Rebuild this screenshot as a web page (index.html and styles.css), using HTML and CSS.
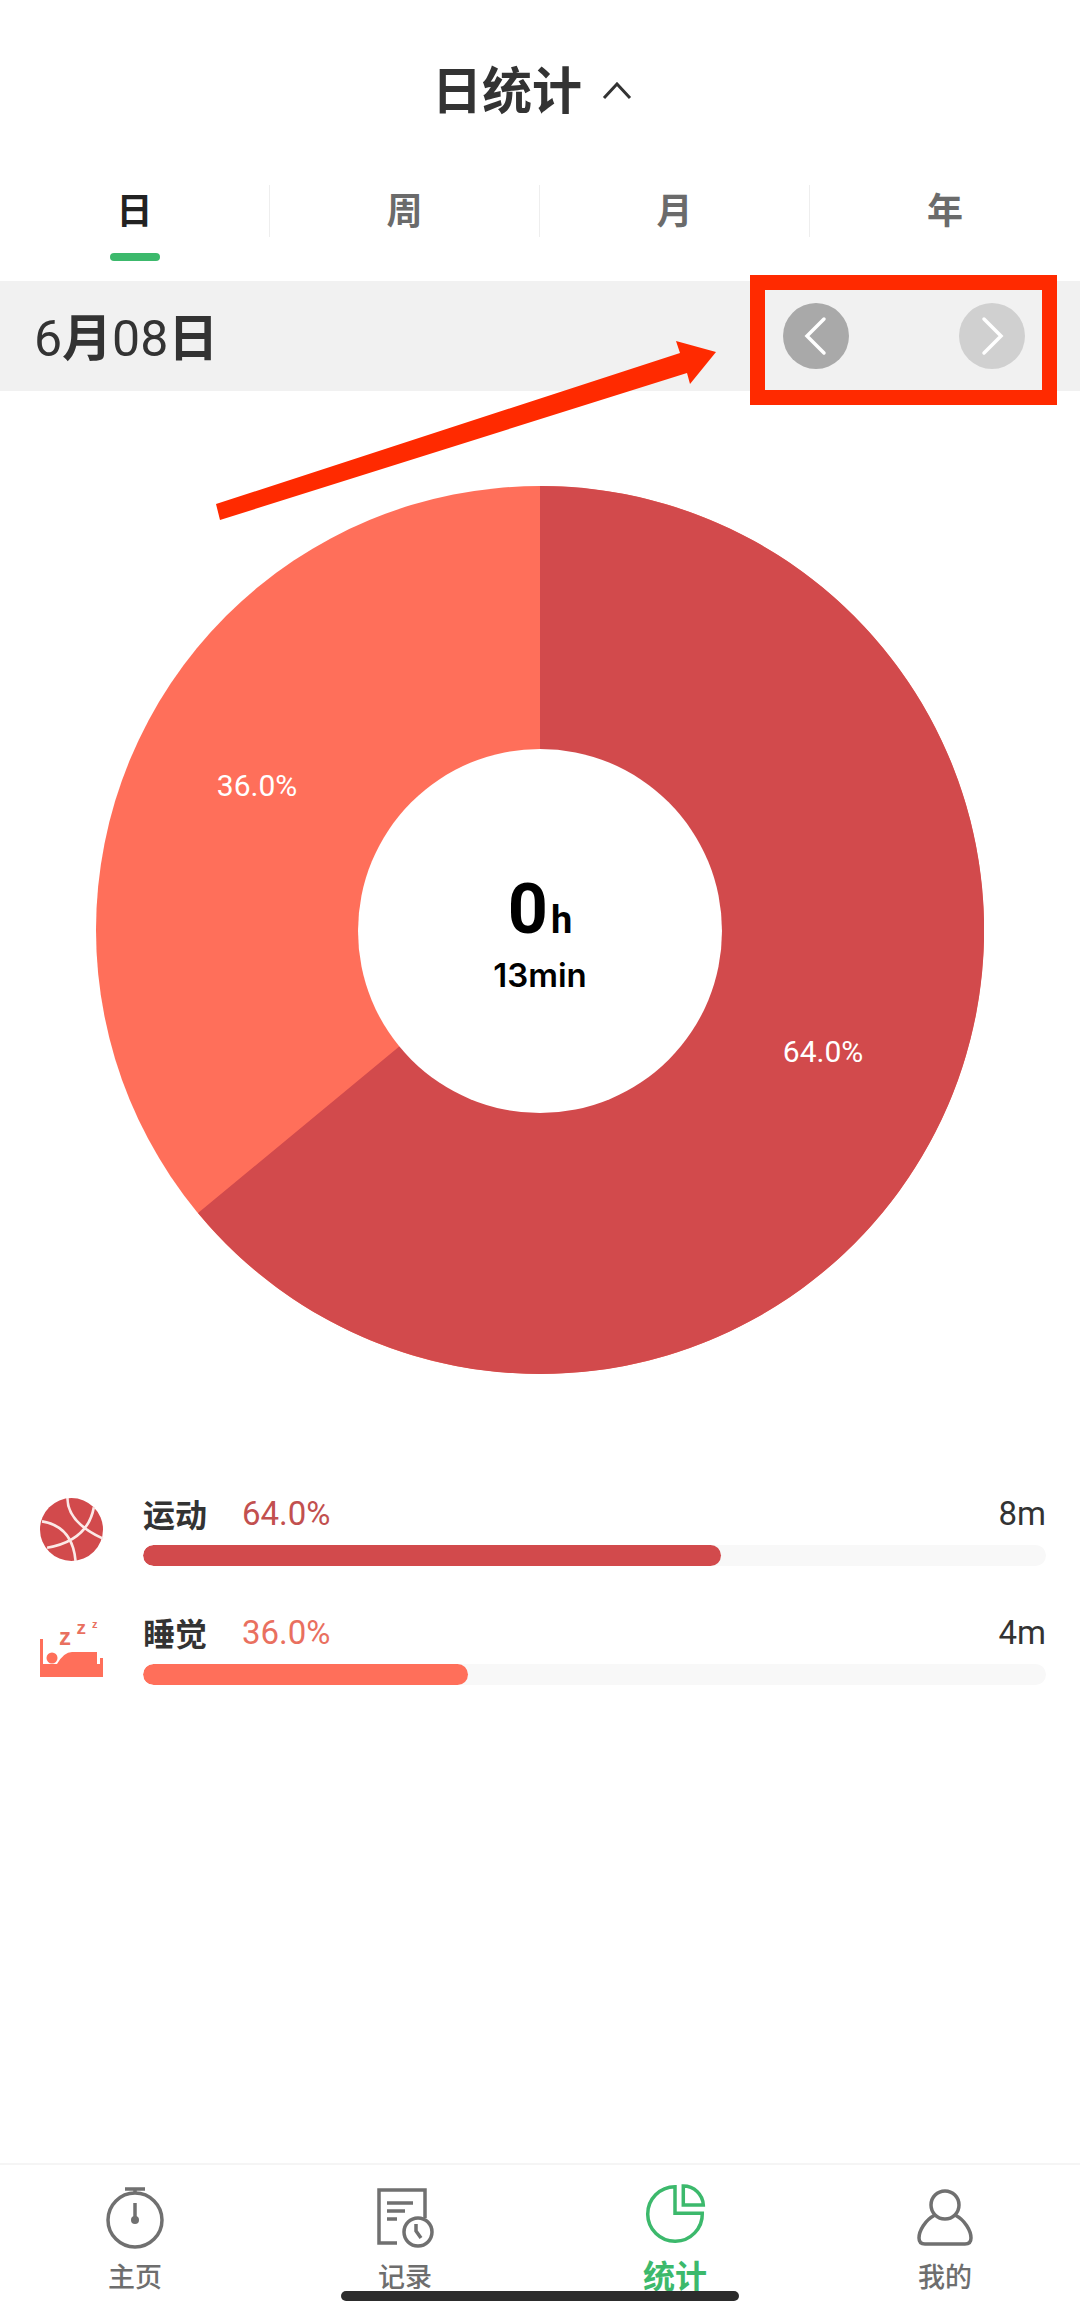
FILE: index.html

```html
<!DOCTYPE html>
<html lang="zh">
<head>
    <meta charset="UTF-8">
    <meta name="viewport" content="width=device-width, initial-scale=1.0">
    <title>日统计</title>
    <link rel="stylesheet" href="styles.css">
</head>
<body>
    <div class="page">
        <header class="title-bar">
            <h1>日统计</h1>
            <svg class="title-arrow" width="30" height="18" viewBox="0 0 30 18"><polyline points="2,16 15,2 28,16"/></svg>
        </header>

        <div class="tabs">
            <div class="tab active"><span class="tab-label">日</span><i class="tab-line"></i></div>
            <div class="tab"><span class="tab-label">周</span></div>
            <div class="tab"><span class="tab-label">月</span></div>
            <div class="tab"><span class="tab-label last">年</span></div>
        </div>

        <div class="date-bar">
            <div class="date"><span>6</span><b>月</b><span>08</span><b>日</b></div>
            <div class="date-nav">
                <button class="round-btn">
                    <svg width="66" height="66" viewBox="0 0 66 66"><polyline points="41,16 24,33 41,50"/></svg>
                </button>
                <button class="round-btn off">
                    <svg width="66" height="66" viewBox="0 0 66 66"><polyline points="25,16 42,33 25,50"/></svg>
                </button>
            </div>
        </div>

        <!-- 饼图 -->
        <div class="chart">
            <svg width="888" height="888" viewBox="0 0 888 888">
                <circle cx="444" cy="444" r="444" fill="#ff6f5a"/>
                <path d="M444 0 A444 444 0 1 1 102 727 L444 444 Z" fill="#d24a4c"/>
                <circle cx="444" cy="445" r="182" fill="#fff"/>
                <text class="pie-label" x="161" y="310">36.0%</text>
                <text class="pie-label" x="727" y="576">64.0%</text>
            </svg>
            <div class="chart-center">
                <div class="hours">0<small>h</small></div>
                <div class="mins">13min</div>
            </div>
        </div>

        <!-- 分类列表 -->
        <div class="list">
            <div class="row">
                <svg class="row-icon" width="63" height="63" viewBox="0 0 62 62">
                    <circle cx="31" cy="31" r="31" fill="#d24a4c"/>
                    <path d="M27 0 Q27 24 62 40 M2 23 Q32 28 35 62 M53 9 Q47 42 7 49" fill="none" stroke="#fbe9e7" stroke-width="2.6"/>
                </svg>
                <div class="row-body">
                    <div class="row-text">
                        <span class="row-name">运动</span>
                        <span class="row-pct red">64.0%</span>
                        <span class="row-time">8m</span>
                    </div>
                    <div class="track"><div class="fill red-bg" style="width: 64%"></div></div>
                </div>
            </div>
            <div class="row">
                <svg class="row-icon bed" width="63" height="57" viewBox="0 0 63 57">
                    <rect x="0" y="19" width="3" height="38" fill="#ff6f5a"/>
                    <rect x="0" y="44" width="63" height="13" fill="#ff6f5a"/>
                    <rect x="60" y="38" width="3" height="19" fill="#ff6f5a"/>
                    <circle cx="12" cy="38" r="5.5" fill="#ff6f5a"/>
                    <path d="M17 44 Q24 32 32 32 H57 V44 Z" fill="#ff6f5a"/>
                    <text class="zzz" x="19" y="24.5" font-size="24">z</text>
                    <text class="zzz" x="36.5" y="14" font-size="19">z</text>
                    <text class="zzz" x="52" y="7.5" font-size="11">z</text>
                </svg>
                <div class="row-body">
                    <div class="row-text">
                        <span class="row-name">睡觉</span>
                        <span class="row-pct coral">36.0%</span>
                        <span class="row-time">4m</span>
                    </div>
                    <div class="track"><div class="fill coral-bg" style="width: 36%"></div></div>
                </div>
            </div>
        </div>

        <!-- 底部导航 -->
        <nav class="nav">
            <div class="nav-item">
                <svg width="64" height="64" viewBox="0 0 64 64">
                    <path d="M22 4 H42 M32 4 V9"/>
                    <circle cx="32" cy="35" r="27"/>
                    <path d="M32 18 V33"/>
                    <circle class="solid" cx="32" cy="35" r="4"/>
                </svg>
                <span>主页</span>
            </div>
            <div class="nav-item">
                <svg width="64" height="64" viewBox="0 0 64 64">
                    <path d="M52 33 V5 H6 V58 H24"/>
                    <path d="M14 18 H40 M14 26 H32 M14 34 H24"/>
                    <circle cx="45" cy="47" r="14"/>
                    <path d="M43 39 V46 L48 53"/>
                </svg>
                <span>记录</span>
            </div>
            <div class="nav-item current">
                <svg width="64" height="64" viewBox="0 0 64 64">
                    <path d="M32 1.7 A27.3 27.3 0 1 0 59.3 28.3 H32 Z"/>
                    <path d="M40.3 1 A20 20 0 0 1 60.3 20 H40.3 Z"/>
                </svg>
                <span>统计</span>
            </div>
            <div class="nav-item">
                <svg width="64" height="64" viewBox="0 0 64 64">
                    <circle cx="32" cy="20" r="14"/>
                    <path d="M22 30 C12 35 6 46 6 53 Q6 59 12 59 H52 Q58 59 58 53 C58 46 52 35 42 30"/>
                </svg>
                <span>我的</span>
            </div>
        </nav>

        <div class="home-bar"></div>

        <!-- 标注 -->
        <div class="mark-box"></div>
        <svg class="mark-arrow" width="1080" height="560" viewBox="0 0 1080 560">
            <polygon points="216,504 680,353 676,341 716,352 690,384 687,373 220,520"/>
        </svg>
    </div>
</body>
</html>
```

FILE: styles.css

```css
body {
    margin: 0;
    background-color: #fff;
    font-family: "Noto Sans CJK SC", "Noto Sans", sans-serif;
    color: #333;
}
.page {
    position: relative;
    width: 1080px;
    height: 2318px;
    overflow: hidden;
    display: flex;
    flex-direction: column;
}
.title-bar {
    height: 185px;
    display: flex;
    align-items: center;
    justify-content: center;
    gap: 20px;
    padding-right: 16px;
    box-sizing: border-box;
}
.title-bar h1 {
    margin: -12px 0 0;
    font-size: 50px;
    font-weight: 700;
    line-height: 60px;
}
.title-arrow {
    margin-top: -3px;
}
.title-arrow polyline {
    fill: none;
    stroke: #333;
    stroke-width: 3;
}
.tabs {
    display: flex;
    height: 96px;
}
.tab {
    flex: 1;
    display: flex;
    flex-direction: column;
    align-items: center;
}
.tab-label {
    width: 100%;
    height: 52px;
    line-height: 47px;
    text-align: center;
    font-size: 36px;
    font-weight: 700;
    color: #6b6b6b;
    border-right: 1px solid #eee;
    box-sizing: border-box;
}
.tab-label.last {
    border-right: none;
}
.tab.active .tab-label {
    color: #222;
}
.tab-line {
    width: 50px;
    height: 8px;
    margin-top: 16px;
    border-radius: 4px;
    background-color: #3cb96c;
}
.date-bar {
    height: 110px;
    background-color: #f1f1f1;
    display: flex;
    align-items: center;
    justify-content: space-between;
    padding: 0 55px 0 34px;
}
.date {
    font-size: 50px;
    line-height: 60px;
    color: #333;
}
.date span {
    font-family: "Roboto", sans-serif;
}
.date b {
    font-weight: 700;
}
.date-nav {
    display: flex;
    gap: 110px;
}
.round-btn {
    width: 66px;
    height: 66px;
    padding: 0;
    border: none;
    border-radius: 50%;
    background-color: #a9a9a9;
}
.round-btn.off {
    background-color: #d0d0d0;
}
.round-btn svg {
    display: block;
}
.round-btn polyline {
    fill: none;
    stroke: #fff;
    stroke-width: 3.5;
    stroke-linecap: round;
}
.chart {
    position: relative;
    width: 888px;
    height: 888px;
    margin: 95px auto 0;
}
.chart svg {
    display: block;
}
.pie-label {
    font-family: "Roboto", sans-serif;
    font-size: 30px;
    fill: #fff;
    text-anchor: middle;
}
.chart-center {
    position: absolute;
    left: 0;
    right: 0;
    top: 390px;
    text-align: center;
    color: #000;
    font-family: "Inter", "Roboto", sans-serif;
    font-weight: 600;
}
.hours {
    font-family: "Roboto", sans-serif;
    font-weight: 700;
    font-size: 70px;
    line-height: 66px;
}
.hours small {
    font-size: 38px;
    margin-left: 3px;
}
.mins {
    font-size: 33px;
    line-height: 44px;
}
.list {
    margin-top: 122px;
    padding: 0 34px 0 40px;
}
.row {
    display: flex;
    gap: 40px;
    height: 119px;
}
.row-icon {
    flex: none;
    margin-top: 2px;
    overflow: visible;
}
.row-icon.bed {
    margin-top: 5px;
}
.row-body {
    flex: 1;
}
.row-text {
    display: flex;
    align-items: center;
    height: 34px;
    margin-bottom: 15px;
}
.row-name {
    font-size: 32px;
    font-weight: 700;
    width: 99px;
}
.row-pct {
    font-family: "Roboto", sans-serif;
    font-size: 33px;
}
.row-pct.red {
    color: #c2504f;
}
.row-pct.coral {
    color: #e9705f;
}
.row-time {
    margin-left: auto;
    font-family: "Roboto", sans-serif;
    font-size: 33px;
}
.track {
    height: 21px;
    border-radius: 11px;
    background-color: #f8f8f8;
    overflow: hidden;
}
.fill {
    height: 100%;
    border-radius: 11px;
}
.red-bg {
    background-color: #d24a4c;
}
.coral-bg {
    background-color: #ff6f5a;
}
.zzz {
    font-family: "Liberation Sans", sans-serif;
    font-weight: 700;
    fill: #e9705f;
}
.nav {
    margin-top: auto;
    height: 155px;
    border-top: 2px solid #f5f5f5;
    box-sizing: border-box;
    display: flex;
    padding-top: 20px;
}
.nav-item {
    flex: 1;
    display: flex;
    flex-direction: column;
    align-items: center;
    font-size: 27px;
    font-weight: 500;
    color: #6e6e6e;
}
.nav-item svg {
    display: block;
    overflow: visible;
    fill: none;
    stroke: #707070;
    stroke-width: 3.5;
}
.nav-item .solid {
    fill: #707070;
    stroke: none;
}
.nav-item span {
    line-height: 36px;
    margin-top: 9px;
}
.nav-item.current {
    color: #3cb96c;
}
.nav-item.current svg {
    stroke: #3cb96c;
}
.nav-item.current span {
    font-size: 32px;
    font-weight: 700;
    margin-top: 7px;
}
.home-bar {
    position: absolute;
    left: 341px;
    top: 2291px;
    width: 398px;
    height: 10px;
    border-radius: 5px;
    background-color: #2c2c2c;
}
.mark-box {
    position: absolute;
    left: 750px;
    top: 275px;
    width: 307px;
    height: 130px;
    border: 15px solid #ff2a00;
    box-sizing: border-box;
}
.mark-arrow {
    position: absolute;
    left: 0;
    top: 0;
}
.mark-arrow polygon {
    fill: #ff2a00;
}
```
